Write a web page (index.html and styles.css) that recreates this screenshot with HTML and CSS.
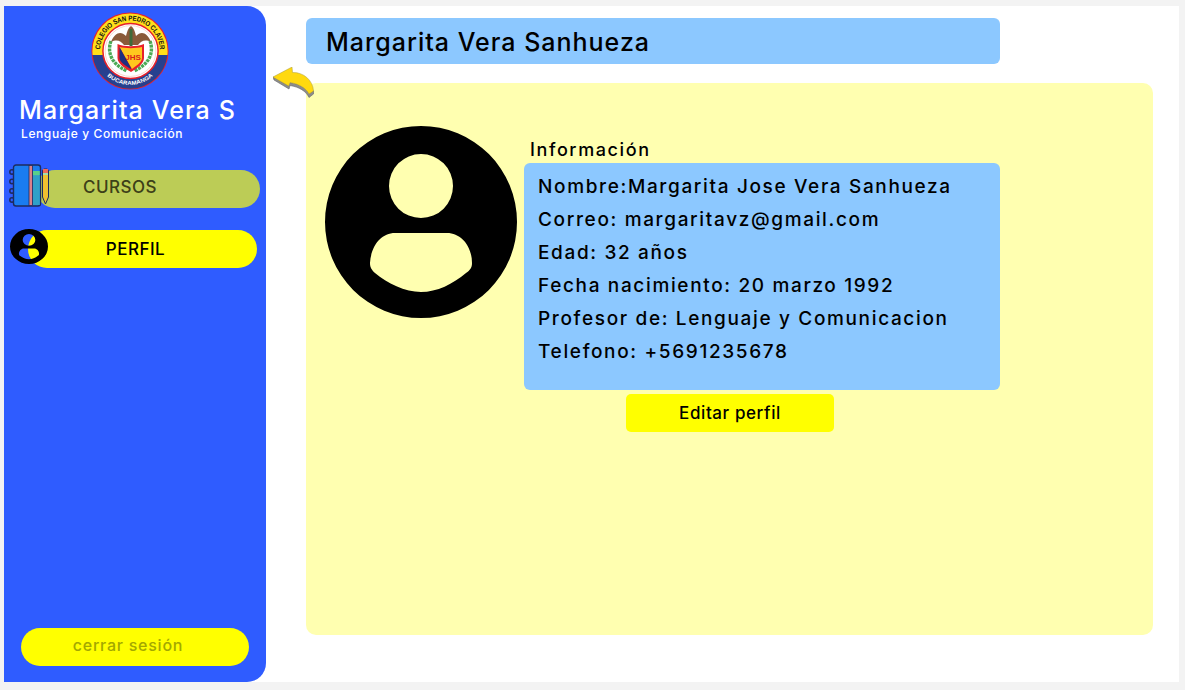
FILE: index.html
```html
<!DOCTYPE html>
<html lang="es">
<head>
<meta charset="utf-8">
<title>Perfil</title>
<link rel="stylesheet" href="styles.css">
</head>
<body>
<div class="app">
  <aside class="sidebar">
    <svg class="logo" viewBox="0 0 78 78">
      <defs>
        <path id="arcTop" d="M9.2 42 A30 30 0 1 1 68.8 42"/>
        <path id="arcBottom" d="M15 63 A34 34 0 0 0 63 63"/>
      </defs>
      <circle cx="39" cy="39" r="38.6" fill="#e8202a"/>
      <path d="M1.6 43 A37.6 37.6 0 1 1 76.4 43 Z" fill="#ffdf1a"/>
      <path d="M1.6 43 H76.4 A37.6 37.6 0 0 1 1.6 43 Z" fill="#26408f"/>
      <text class="logo-top"><textPath href="#arcTop" startOffset="50%" text-anchor="middle" textLength="92" lengthAdjust="spacingAndGlyphs">COLEGIO SAN PEDRO CLAVER</textPath></text>
      <text class="logo-bottom"><textPath href="#arcBottom" startOffset="50%" text-anchor="middle" textLength="50" lengthAdjust="spacingAndGlyphs">BUCARAMANGA</textPath></text>
      <circle cx="39.5" cy="39" r="27.6" fill="#fff" stroke="#e8202a" stroke-width="1.5"/>
      <circle cx="39.5" cy="39" r="25.4" fill="#fff" stroke="#f0b0a0" stroke-width=".5"/>
      <path d="M20 29 C16 40 20 52 36 59 M59 29 C63 40 59 52 43 59" fill="none" stroke="#4caa55" stroke-width="3.4" stroke-dasharray="3 .8"/>
      <path d="M40 14 C37 16 36 20 35 24 C30 19 24 20 20 30 C26 27 30 29 33 33 H47 C50 29 54 27 60 30 C56 20 50 19 45 24 C44 20 43 16 40 14 Z" fill="#8a5a3a"/>
      <path d="M38.5 17 H41.5 V34 H38.5 Z" fill="#3f6b3a"/>
      <path d="M26.5 32 C33 35 46 35 53 32 V46 C53 52 45 57 40 60 C35 57 26.5 52 26.5 46 Z" fill="#e8202a"/>
      <path d="M28.5 35 C34 36.5 45 36.5 51 35 V46 C51 50 45 54 41 57 Z" fill="#ffc81e"/>
      <path d="M28.5 35 L40 56 L39.5 57 C35 54 28.5 50 28.5 46 Z" fill="#1f2f80"/>
      <text class="logo-jhs" x="42" y="48" text-anchor="middle">JHS</text>
    </svg>
    <h1 class="teacher-name">Margarita Vera S</h1>
    <p class="teacher-subject">Lenguaje y Comunicación</p>
    <nav class="nav">
      <a class="pill pill-courses">CURSOS
        <svg class="notebook" viewBox="0 0 41 44">
          <g fill="none" stroke="#1d2b5e" stroke-width="1.5">
            <circle cx="3" cy="8" r="2.2"/><circle cx="3" cy="17.5" r="2.2"/><circle cx="3" cy="27" r="2.2"/><circle cx="3" cy="36" r="2.2"/>
          </g>
          <rect x="4.5" y="1" width="27" height="41" rx="2.5" fill="#1a7cf0" stroke="#1d2b5e" stroke-width="1.4"/>
          <rect x="20" y="1.5" width="3.5" height="40" fill="#d9808a" stroke="#1d2b5e" stroke-width=".8"/>
          <rect x="24" y="12" width="6.8" height="29" fill="#2fa0c8"/>
          <rect x="24" y="7" width="6.8" height="4.5" fill="#59d08a"/>
          <path d="M33.5 7 C33.5 4 39.5 4 39.5 7 V33 L36.5 40 L33.5 33 Z" fill="#f0c030" stroke="#1d2b5e" stroke-width="1"/>
          <path d="M34 5 H39 V9 H34 Z" fill="#ef6a5a"/>
          <path d="M34 9 H39 V11 H34 Z" fill="#a8e0a8"/>
        </svg>
      </a>
      <a class="pill pill-profile">PERFIL
        <svg class="person-small" viewBox="0 0 192 192" preserveAspectRatio="none"><path fill-rule="evenodd" d="M96 0 A96 96 0 1 0 96 192 A96 96 0 1 0 96 0 Z M96 28 A32 32 0 1 1 96 92 A32 32 0 1 1 96 28 Z M70 107 H122 C136 107 147 120 147 137 C147 142 145 144 141 147 C128 158 112 166 96 166 C80 166 62 157 50 147 C47 144 45 142 45 137 C46 120 56 107 70 107 Z"/></svg>
      </a>
    </nav>
    <a class="logout">cerrar sesión</a>
  </aside>
  <main class="main">
    <svg class="back" viewBox="0 0 41 31">
      <path d="M0 10 L1 13 L16 22 L17 18.5 C26 20 33 24 36 30.5 L40.5 27 L40.5 24 L36 26 C33 21 26 17 17 15.5 L16 19 Z" fill="#8c8c8c" stroke="#666" stroke-width=".6"/>
      <path d="M0 10 L19 0 L19.5 5.5 C30 5 40 13 40.5 24 L36 27 C33 21 26 17 17 15.5 L15.7 19 Z" fill="#ffd90f" stroke="#a89a3a" stroke-width=".5"/>
    </svg>
    <h2 class="title">Margarita Vera Sanhueza</h2>
    <section class="panel">
      <svg class="avatar" viewBox="0 0 192 192"><path fill-rule="evenodd" d="M96 0 A96 96 0 1 0 96 192 A96 96 0 1 0 96 0 Z M96 28 A32 32 0 1 1 96 92 A32 32 0 1 1 96 28 Z M70 107 H122 C136 107 147 120 147 137 C147 142 145 144 141 147 C128 158 112 166 96 166 C80 166 62 157 50 147 C47 144 45 142 45 137 C46 120 56 107 70 107 Z"/></svg>
      <div class="info">
        <h3 class="info-title">Información</h3>
        <div class="info-card">
          <p>Nombre:Margarita Jose Vera Sanhueza</p>
          <p>Correo: margaritavz@gmail.com</p>
          <p>Edad: 32 años</p>
          <p>Fecha nacimiento: 20 marzo 1992</p>
          <p>Profesor de: Lenguaje y Comunicacion</p>
          <p>Telefono: +5691235678</p>
        </div>
        <a class="edit">Editar perfil</a>
      </div>
    </section>
  </main>
</div>
</body>
</html>
```
FILE: styles.css
```css
* { box-sizing: border-box; }
html, body { height: 100%; }
body {
  margin: 0;
  background: #f3f3f3;
  font-family: "Inter", "Lato", sans-serif;
  color: #000;
  overflow: hidden;
}
.app {
  display: flex;
  width: 1175px;
  height: 676px;
  margin: 6px 0 0 4px;
  background: #fff;
}
.sidebar {
  width: 262px;
  height: 100%;
  flex: none;
  display: flex;
  flex-direction: column;
  padding: 6px 0 16px;
  background: #2f5cff;
  border-radius: 0 19px 19px 0;
  color: #fff;
}
.logo { width: 78px; height: 78px; align-self: center; margin-left: -10px; }
.logo-top { font: 800 7px "Liberation Sans", sans-serif; fill: #111; }
.logo-bottom { font: 800 5.6px "Liberation Sans", sans-serif; fill: #fff; }
.logo-jhs { font: 700 8px "Liberation Sans", sans-serif; fill: #d8201c; }
.teacher-name {
  margin: 2px 0 0 15px;
  font-size: 25px;
  line-height: 36px;
  font-weight: 500;
  letter-spacing: 1.1px;
}
.teacher-subject {
  margin: -2px 0 0 17px;
  font-size: 12px;
  line-height: 16px;
  font-weight: 500;
  letter-spacing: .6px;
}
.nav { display: flex; flex-direction: column; gap: 22px; margin-top: 28px; }
.pill {
  position: relative;
  display: block;
  height: 38px;
  line-height: 35px;
  border-radius: 19px;
  text-align: center;
  font-size: 17px;
  font-weight: 500;
  letter-spacing: .5px;
}
.pill-courses {
  width: 224px;
  margin-left: 32px;
  padding-right: 56px;
  background: #bccc56;
  color: #3c4018;
}
.pill-profile {
  width: 229px;
  margin-left: 24px;
  padding-right: 14px;
  line-height: 39px;
  background: #ff0;
  color: #000;
}
.notebook { position: absolute; left: -27px; top: -6px; width: 41px; height: 44px; }
.person-small { position: absolute; left: -18px; top: -1px; width: 38px; height: 35px; }
.logout {
  display: block;
  width: 228px;
  height: 38px;
  margin: auto 0 0 17px;
  line-height: 34px;
  border-radius: 19px;
  background: #ff0;
  color: #a3a800;
  text-align: center;
  padding-right: 14px;
  font-size: 16px;
  font-weight: 500;
  letter-spacing: .75px;
}
.main {
  position: relative;
  flex: 1;
  min-width: 0;
  display: flex;
  flex-direction: column;
  padding: 12px 26px 47px 40px;
}
.back { position: absolute; left: 7px; top: 61px; width: 41px; height: 31px; }
.title {
  width: 694px;
  height: 46px;
  flex: none;
  margin: 0 0 19px;
  padding-left: 20px;
  background: #8cc8ff;
  border-radius: 6px;
  font-size: 25px;
  line-height: 49px;
  font-weight: 500;
  letter-spacing: 1px;
}
.panel {
  flex: 1;
  display: flex;
  gap: 7px;
  padding: 43px 0 0 19px;
  background: #ffffb0;
  border-radius: 10px;
}
.avatar { width: 192px; height: 192px; flex: none; }
.info { width: 476px; margin-top: 10px; }
.info-title {
  margin: 0 0 0 6px;
  height: 27px;
  font-size: 18px;
  line-height: 28px;
  font-weight: 500;
  letter-spacing: 1.6px;
}
.info-card {
  height: 227px;
  padding: 7px 0 0 14px;
  background: #8cc8ff;
  border-radius: 6px;
}
.info-card p {
  margin: 0;
  font-size: 19px;
  line-height: 33.1px;
  font-weight: 500;
  letter-spacing: 1.65px;
}
.edit {
  display: block;
  width: 208px;
  height: 38px;
  margin: 4px 0 0 102px;
  background: #ff0;
  border-radius: 5px;
  text-align: center;
  font-size: 17px;
  line-height: 39px;
  font-weight: 500;
  letter-spacing: .6px;
}
```
